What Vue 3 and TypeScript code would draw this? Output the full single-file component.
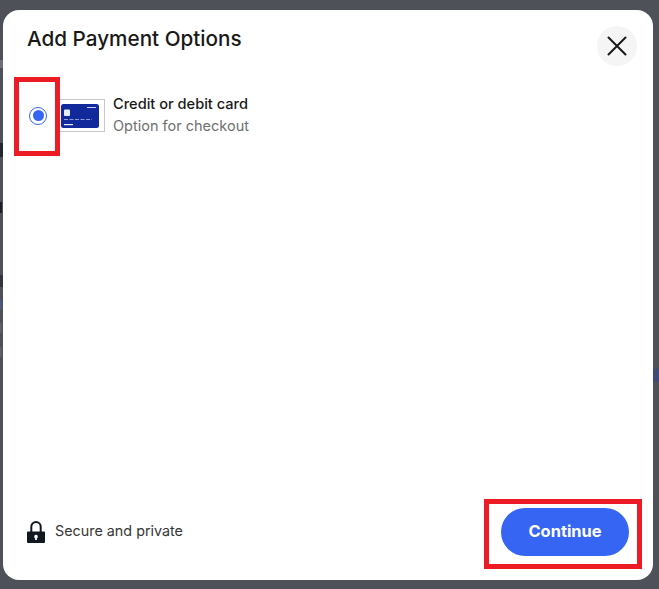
<template>
  <div class="page">
    <!-- page content peeking out behind the overlay -->
    <span v-for="s in scraps" :key="s.id" class="scrap" :style="s.style"></span>

    <section class="dialog" role="dialog" aria-label="Add Payment Options">
      <header class="dialog-head">
        <h2 class="dialog-title">Add Payment Options</h2>
        <button class="close-btn" aria-label="Close">
          <svg width="20" height="20" viewBox="0 0 20 20" fill="none">
            <path d="M1.5 1.5 18.5 18.5M18.5 1.5 1.5 18.5" stroke="#191919" stroke-width="2" stroke-linecap="round" />
          </svg>
        </button>
      </header>

      <div class="option">
        <span class="radio-mark"><span class="radio"><span class="radio-dot"></span></span></span>
        <span class="card-thumb">
          <svg width="38" height="24" viewBox="0 0 38 24">
            <rect width="38" height="24" rx="2.5" fill="#12299b" />
            <rect x="3" y="5.5" width="6" height="6.5" rx="1" fill="#e6ebf7" />
            <rect x="26" y="3" width="9" height="1" fill="#c6d0f0" />
            <path d="M3 15.5h28" stroke="#8c9bdc" stroke-width="1" stroke-dasharray="4 1.5" />
            <rect x="3" y="20" width="9" height="1.2" fill="#e6ebf7" />
          </svg>
        </span>
        <span class="option-text">
          <span class="option-name">Credit or debit card</span>
          <span class="option-hint">Option for checkout</span>
        </span>
      </div>

      <footer class="dialog-foot">
        <div class="secure">
          <svg class="lock" width="18" height="22" viewBox="0 0 18 22">
            <path d="M4.3 12V5.7a4.7 4.7 0 0 1 9.4 0V12" fill="none" stroke="#111820" stroke-width="2" />
            <path fill-rule="evenodd" d="M1 10.5h16a1 1 0 0 1 1 1V21a1 1 0 0 1-1 1H1a1 1 0 0 1-1-1v-9.500a1 1 0 0 1 1-1Zm8 3.300a1.800 1.800 0 0 0-.9 3.360V19h1.800v-1.840A1.800 1.800 0 0 0 9 13.800Z" fill="#111820" />
          </svg>
          <span>Secure and private</span>
        </div>
        <div class="continue-mark">
          <button class="continue-btn">Continue</button>
        </div>
      </footer>
    </section>
  </div>
</template>

<script setup lang="ts">
interface Scrap {
  id: number
  style: Record<string, string>
}

const box = (id: number, left: number, top: number, width: number, height: number, background: string): Scrap => ({
  id,
  style: {
    left: `${left}px`,
    top: `${top}px`,
    width: `${width}px`,
    height: `${height}px`,
    background
  }
})

const scraps: Scrap[] = [
  box(1, 0, 60, 3, 8, '#6d7176'),
  box(2, 0, 143, 3, 14, '#23272d'),
  box(3, 0, 202, 2, 11, '#1c2026'),
  box(4, 0, 275, 3, 12, '#33373d'),
  box(5, 0, 300, 2, 10, '#4a5a78'),
  box(6, 0, 323, 2, 10, '#5c6068'),
  box(7, 0, 347, 2, 10, '#5c6068'),
  box(8, 653, 369, 6, 13, '#3f4a78')
]
</script>

<style>
html,
body {
  margin: 0;
  background: #4e5258;
}
</style>

<style scoped>
.page {
  position: relative;
  box-sizing: border-box;
  width: 659px;
  height: 589px;
  padding: 10px 6px 9px 3px;
  background: #4e5258;
  overflow: hidden;
  font-family: Inter, "Open Sans", sans-serif;
}

.scrap {
  position: absolute;
}

.dialog {
  position: relative;
  box-sizing: border-box;
  height: 100%;
  display: flex;
  flex-direction: column;
  background: #ffffff;
  border-radius: 16px;
}

.dialog-head {
  display: flex;
  justify-content: space-between;
  align-items: flex-start;
  padding: 16px 16px 0 24px;
}

.dialog-title {
  margin: 0;
  font-size: 20.7px;
  line-height: 26px;
  font-weight: 500;
  color: #191919;
}

.close-btn {
  width: 40px;
  height: 40px;
  display: flex;
  align-items: center;
  justify-content: center;
  padding: 0;
  border: none;
  border-radius: 50%;
  background: #f5f5f5;
}

.option {
  display: flex;
  align-items: center;
  margin-top: 11px;
  padding-left: 11px;
}

.radio-mark {
  box-sizing: border-box;
  width: 46px;
  height: 79px;
  display: flex;
  align-items: center;
  justify-content: center;
  padding: 0 0 2px 2px;
  border: 5px solid #ed1c24;
}

.radio {
  box-sizing: border-box;
  width: 18px;
  height: 18px;
  display: flex;
  align-items: center;
  justify-content: center;
  border: 1px solid #3665f3;
  border-radius: 50%;
}

.radio-dot {
  width: 11px;
  height: 11px;
  border-radius: 50%;
  background: #3665f3;
}

.card-thumb {
  box-sizing: border-box;
  width: 45px;
  height: 33px;
  margin-bottom: 2px;
  display: flex;
  align-items: center;
  padding-left: 1px;
  border: 1px solid #c8c8c8;
  border-left: none;
}

.option-text {
  display: flex;
  flex-direction: column;
  gap: 2px;
  margin: 0 0 3px 8px;
}

.option-name {
  font-size: 14.6px;
  line-height: 19px;
  font-weight: 500;
  color: #191919;
}

.option-hint {
  font-size: 14.5px;
  line-height: 19px;
  color: #707070;
}

.dialog-foot {
  margin-top: auto;
  display: flex;
  align-items: center;
  justify-content: space-between;
  padding: 0 11px 11px 24px;
}

.secure {
  display: flex;
  align-items: center;
  gap: 10px;
  margin-bottom: 7px;
  font-size: 14.35px;
  color: #363636;
}

.lock {
  margin-top: 2px;
}

.continue-mark {
  box-sizing: border-box;
  width: 158px;
  height: 70px;
  padding: 4px 8px 0 12px;
  border: 5px solid #ed1c24;
}

.continue-btn {
  display: block;
  width: 128px;
  height: 48px;
  padding: 0 0 2px;
  border: none;
  border-radius: 24px;
  background: #3665f3;
  color: #ffffff;
  font-family: inherit;
  font-size: 16.4px;
  font-weight: 700;
}
</style>
